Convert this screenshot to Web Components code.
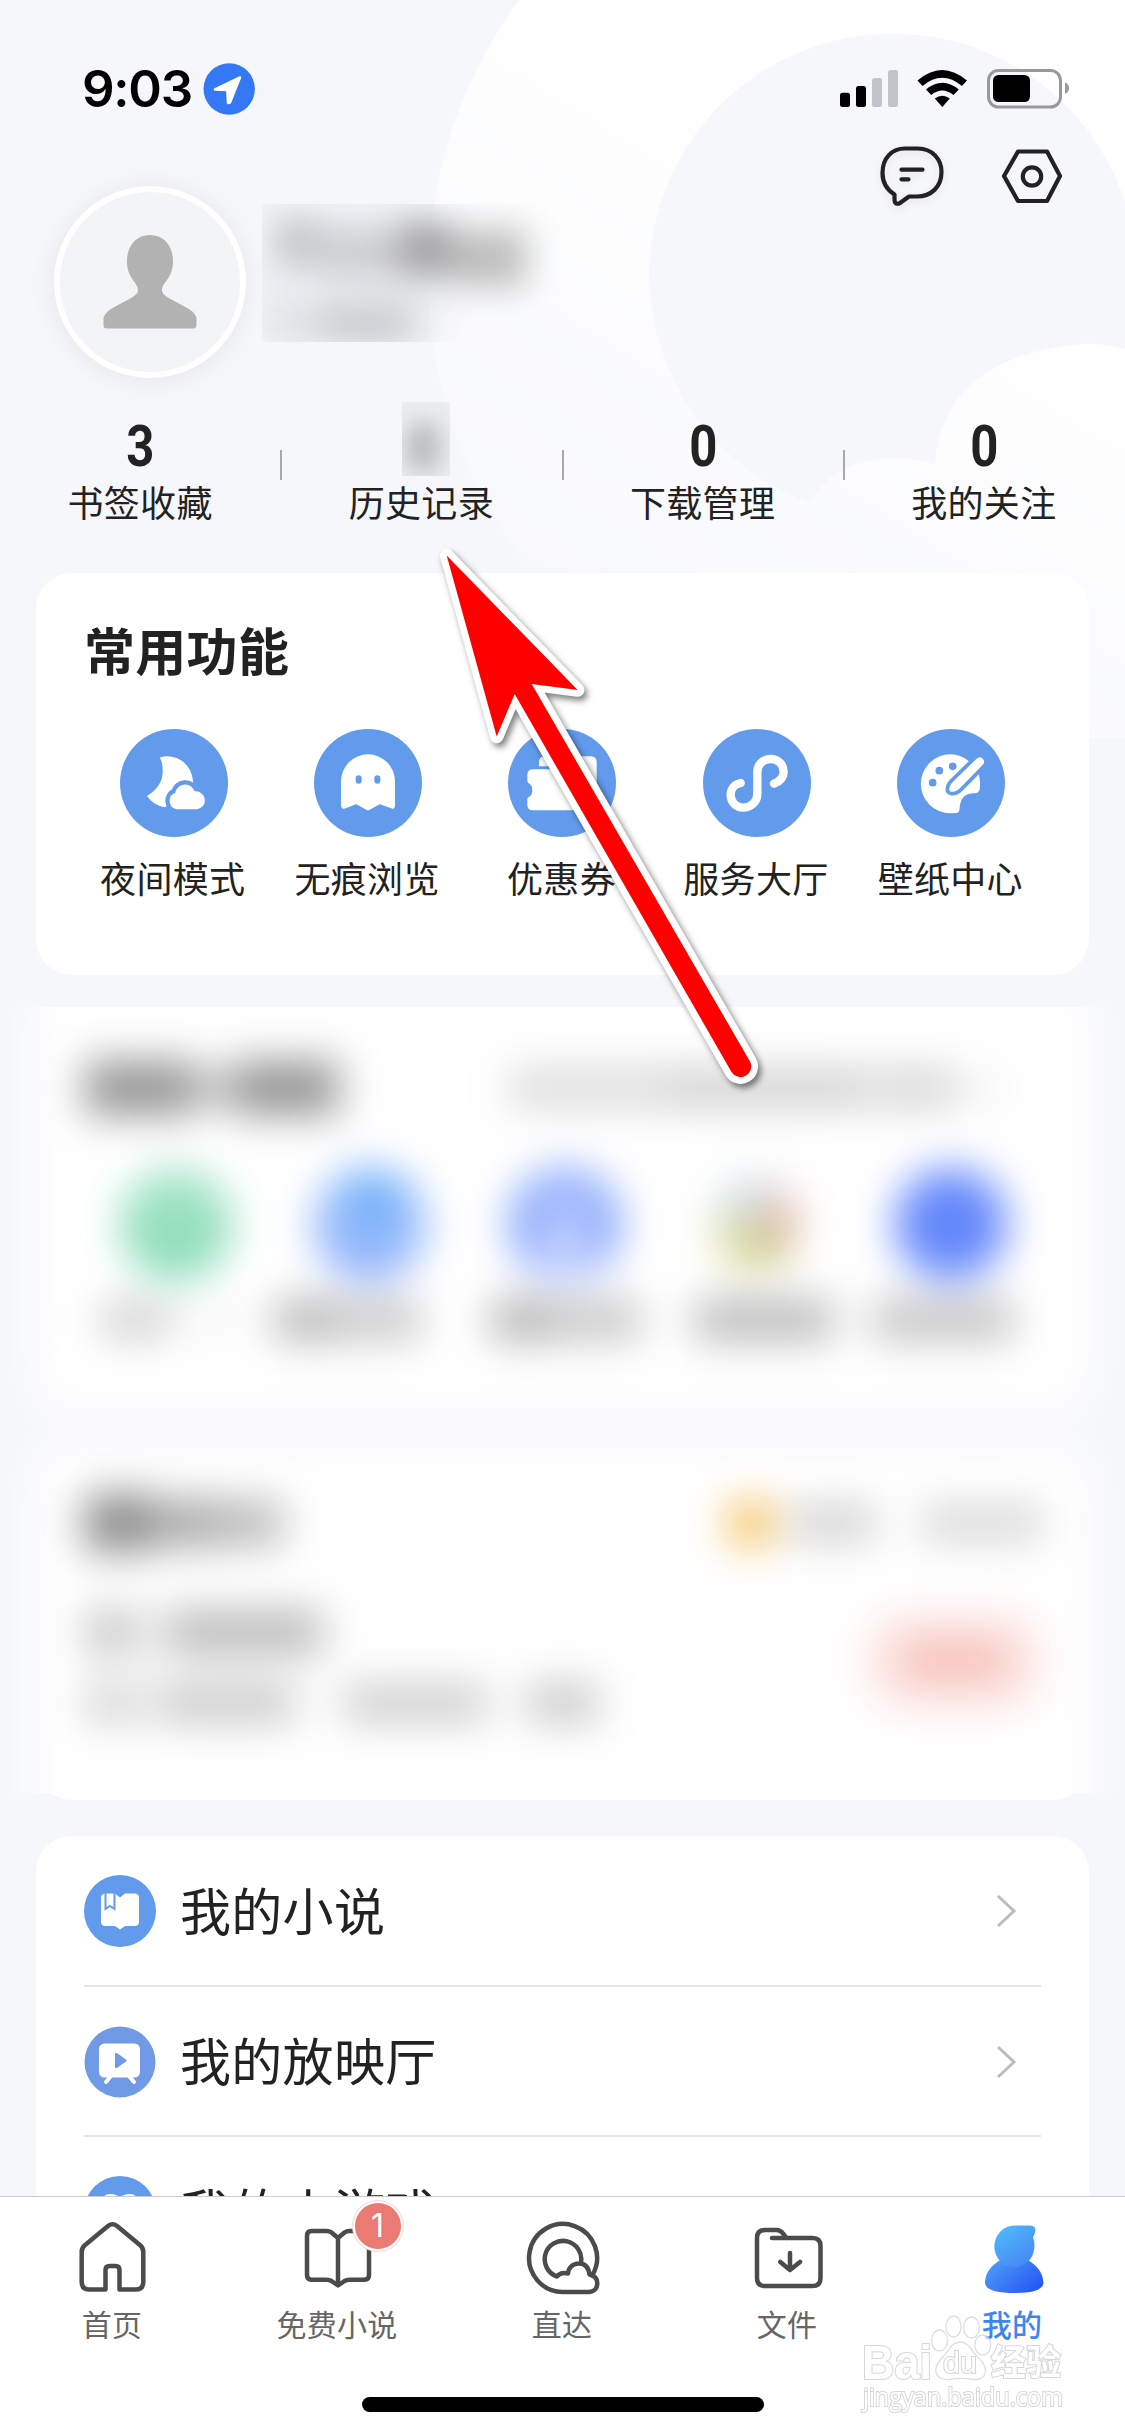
<!DOCTYPE html>
<html lang="zh-CN">
<head>
<meta charset="utf-8">
<title>我的</title>
<style>
html,body{margin:0;padding:0}
body{width:1125px;height:2436px;overflow:hidden;background:#f6f7fb;font-family:"Noto Sans CJK SC",sans-serif;color:#222}
</style>
</head>
<body>
<profile-screen></profile-screen>
<script>
const def=(name,html,setup)=>customElements.define(name,class extends HTMLElement{
  connectedCallback(){
    if(this.shadowRoot)return;
    const root=this.attachShadow({mode:'open'});
    root.innerHTML='<style>*{box-sizing:border-box}svg{display:block;flex:none}</style>'+(typeof html==='function'?html(this):html);
    if(setup)setup(this,root);
  }
});

const icons={
night:`<svg width="108" height="108" viewBox="60 56 324 324"><circle cx="222" cy="218" r="162" fill="#629bec"/><path fill="#fff" d="M181 141Q204 134 230 143Q275 162 280 218L260 260L194 291Q160 285 141 257Q190 227 188 180Q188 155 180 143Z"/><path id="c" d="M230 297A26 26 0 0 1 226 247A30 30 0 0 1 284 243A27 27 0 0 1 291 297Z" fill="#fff" stroke="#629bec" stroke-width="26" paint-order="stroke"/></svg>`,
ghost:`<svg width="108" height="108" viewBox="642 56 324 324"><circle cx="804" cy="218" r="162" fill="#629bec"/><path fill="#fff" d="M723 213A81 81 0 0 1 885 213V284Q885 298 873 294L844 283Q840 281 836 283L808 299Q804 301 800 299L772 283Q768 281 764 283L737 294Q723 298 723 284Z"/><rect x="767" y="195" width="18" height="25" rx="9" fill="#629bec"/><rect x="823" y="195" width="18" height="25" rx="9" fill="#629bec"/></svg>`,
coupon:`<svg width="108" height="108" viewBox="0 0 324 324"><circle cx="162" cy="162" r="162" fill="#629bec"/><path fill="#fff" d="M93 112V100Q93 82 111 82H248Q266 82 266 100V186Q266 204 248 204H236V130Q236 112 218 112Z"/><path fill="#fff" d="M58 138Q58 121 75 121H210Q226 121 226 138V228Q226 244 210 244H75Q58 244 58 228V210Q58 205 64 203Q73 198 73 183Q73 168 64 164Q58 161 58 155Z"/></svg>`,
service:`<svg width="108" height="108" viewBox="429 56 324 324"><circle cx="591" cy="218" r="162" fill="#629bec"/><path fill="none" stroke="#fff" stroke-width="25" stroke-linecap="round" d="M642 220C662 212 671 200 671 184C671 162 653 146 632 146C609 146 592 162 592 186V250C592 275 572 292 549 292C528 292 512 275 512 254C512 234 525 221 542 218"/></svg>`,
palette:`<svg width="108" height="108" viewBox="1011 56 324 324"><circle cx="1173" cy="218" r="162" fill="#629bec"/><path fill="#fff" d="M1171 132A88 88 0 0 0 1171 309L1190 308Q1199 306 1199 292Q1202 250 1240 249Q1256 249 1259 238Q1262 215 1257 194L1226 152Q1202 133 1171 132Z"/><g fill="#629bec"><circle cx="1118" cy="217" r="11.500"/><circle cx="1138" cy="181" r="11.500"/><circle cx="1178" cy="168" r="11.500"/></g><path fill="#fff" stroke="#629bec" stroke-width="22" paint-order="stroke" d="M1249 146Q1260 136 1269 146Q1277 155 1267 165L1201 232Q1188 246 1173 244Q1166 243 1168 234Q1169 224 1178 215Z"/></svg>`,
novel:`<svg width="72" height="72"><circle cx="36" cy="36" r="36" fill="#629bec"/><path fill="#fff" d="M17 23Q17 18.500 21.500 18.500H31L36 22.500L41 18.500H50.500Q55 18.500 55 23V46.500Q55 51 50.500 51H41L36 54.500L31 51H21.500Q17 51 17 46.500Z"/><path fill="#fff" stroke="#629bec" stroke-width="2" d="M21.500 17.500H30.500V34L26 31L21.500 34Z"/></svg>`,
cinema:`<svg width="72" height="72"><circle cx="36" cy="36" r="35.500" fill="#7099e6"/><rect x="15" y="17.500" width="41" height="34" rx="5.500" fill="#fff"/><path d="M27 50L22 56M45 50L50 56" stroke="#fff" stroke-width="4" stroke-linecap="round"/><path fill="#7099e6" d="M31 28.500Q31 26 33.200 27.300L42 33.500Q43.500 34.500 42 35.500L33.200 41.700Q31 43 31 40.500Z"/></svg>`,
game:`<svg width="72" height="72"><circle cx="36" cy="36" r="36" fill="#629bec"/><path fill="#fff" d="M16 29Q18 18 26 18Q32 18 36 21Q40 18 46 18Q54 18 56 29L58 46Q57 54 50 50L43 44H29L22 50Q15 54 14 46Z"/></svg>`
};

def('page-backdrop',`<style>:host{position:absolute;left:0;top:0;width:1125px;height:738px;overflow:hidden}</style>
<svg width="1125" height="738"><defs><linearGradient id="g" gradientUnits="userSpaceOnUse" x1="800" y1="150" x2="520" y2="600"><stop offset="0" stop-color="#fff"/><stop offset="1" stop-color="#fff" stop-opacity=".12"/></linearGradient></defs>
<path fill="url(#g)" fill-rule="evenodd" d="M429 273A457 457 0 0 1 1343 273V738H886A457 457 0 0 1 429 273ZM649 277A244 244 0 0 0 811 503Q832 459 898 458Q922 459 935 465Q942 355 1087 343.500Q1108 344 1125 349V202A244 244 0 0 0 649 277Z"/></svg>`);

def('status-bar',`<style>
:host{display:flex;height:132px;padding:0 56px 0 82px;align-items:flex-start}
.t{font:600 51px/56px Inter,sans-serif;color:#000;margin-top:61px;width:121px;letter-spacing:-1.300px;white-space:nowrap}
.loc{margin-top:63px}.r{display:flex;margin:68px 0 0 auto}
</style><div class="t">9:03</div>
<svg class="loc" width="52" height="52" viewBox="202.500 63 52 52"><circle cx="228.700" cy="89" r="25.700" fill="#3478f6"/><path fill="#fff" stroke="#fff" stroke-width="2.500" stroke-linejoin="round" d="M239.500 77.500L214.500 89.500L226.800 90L227.500 103L229.500 102.500Z"/></svg>
<svg class="r" width="231" height="42" viewBox="838 68 231 42"><rect x="840" y="92.700" width="10" height="14.300" rx="2.500"/><rect x="856" y="86" width="10" height="21" rx="2.500"/><g fill="#c3c4c9"><rect x="872" y="78" width="10" height="29" rx="2.500"/><rect x="888" y="70" width="10" height="37" rx="2.500"/></g>
<path d="M917.500 80.500Q942 59.500 967 80.500L962 86Q942.300 69.500 922.500 86ZM926 89.500Q942.300 76 958.800 89.500L953.500 95Q942.300 86 931.200 95ZM934.800 98.500Q942.300 93 949.800 98.500L942.300 107Z"/>
<rect x="988.500" y="70.500" width="72" height="36.500" rx="10" fill="none" stroke="#999" stroke-width="3"/><rect x="993" y="75" width="37" height="27" rx="5.500"/><path fill="#999" d="M1065 82.500Q1069 84 1069 88Q1069 92 1065 94Z"/></svg>`);

def('profile-header',`<style>
:host{display:flex;height:270px;align-items:flex-start;padding-left:54px}
.av{width:192px;height:192px;border-radius:50%;background:#f3f4f6;border:6px solid #fff;margin-top:54px;box-shadow:0 2px 30px rgba(0,0,0,.07);display:flex;justify-content:center}
.av svg{margin-top:43px}
.name{margin:72px 0 0 16px;width:300px;height:138px;overflow:hidden}
.name svg{filter:blur(17px)}
.acts{display:flex;gap:55px;margin:12px 61px 0 auto}
.acts svg:first-child{filter:drop-shadow(0 3px 4px rgba(0,0,0,.08))}
</style>
<div class="av"><svg width="94" height="94" viewBox="103 235 94 94"><path fill="#b2b2b2" d="M150 235C164 235 173 246 173 261C173 279 162 282 162 290C162 296 170 298 189 309Q196.500 314 196.500 319V325Q196.500 328.600 193 328.600H107Q103.500 328.600 103.500 325V319Q103.500 314 111 309C130 298 138 296 138 290C138 282 127 279 127 261C127 246 136 235 150 235Z"/></svg></div>
<div class="name"><svg width="300" height="138"><rect x="-40" y="-30" width="220" height="200" fill="#e9ebef" opacity=".8"/><rect x="14" y="16" width="42" height="44" fill="#c0c2c6"/><rect x="58" y="26" width="80" height="46" fill="#cbccd0"/><rect x="138" y="18" width="50" height="54" fill="#a2a2a6"/><rect x="188" y="26" width="76" height="56" fill="#bcbcbc"/><rect x="60" y="104" width="90" height="40" fill="#c3c5c8"/><rect x="4" y="104" width="56" height="34" fill="#dcdfe2"/></svg></div>
<div class="acts"><svg width="66" height="64" viewBox="879 144 66 64" fill="none" stroke="#222" stroke-width="4.200" stroke-linecap="round" stroke-linejoin="round"><path d="M905 148.500H918C932 148.500 941.500 159 941.500 172C941.500 187 931 196.500 917 196.500H909L900 203Q894.500 205.500 894.500 199V194.500Q882.500 187 882.500 173C882.500 158 892 148.500 905 148.500Z"/><path d="M901.500 169.700H922.500M901.500 179.300H908.500"/></svg>
<svg width="64" height="64" viewBox="1000 144.500 64 64" fill="none" stroke="#222" stroke-width="4.200" stroke-linejoin="round"><path d="M1018 152H1047L1060 176.500L1047 201.500H1018L1004 176.500Z"/><circle cx="1032" cy="177" r="9.200"/></svg></div>`);

def('stat-item',e=>`<style>
:host{display:flex;flex:1;flex-direction:column;align-items:center;position:relative}
.n{height:72px;display:flex;align-items:flex-end;justify-content:center;font:700 57px/54px Roboto,sans-serif}
.n span{display:block;transform:scaleX(.86)}
.l{font-size:36px;line-height:54px;margin:0 0 0 -1px;letter-spacing:.3px}
i{position:absolute;right:-1px;top:48px;width:2px;height:30px;background:#a9a9ad}
:host([last]) i{display:none}
.b{width:48px;height:74px;overflow:hidden;margin:0 0 -2px 8px;background:#eceef1}
.b svg{filter:blur(12px)}
</style>${e.hasAttribute('masked')?'<div class="b"><svg width="48" height="74"><rect x="6" y="22" width="30" height="46" fill="#b4b5b8"/></svg></div>':`<div class="n"><span>${e.getAttribute('value')}</span></div>`}<div class="l"><slot></slot></div><i></i>`);

def('stats-row',`<style>:host{display:flex;height:171px;padding-top:0}</style><slot></slot>`);

def('shortcut-item',e=>`<style>
:host{display:flex;flex-direction:column;align-items:center;width:194.400px}
.l{font-size:36px;line-height:54px;margin:13px 0 0 -2px;letter-spacing:.3px;white-space:nowrap}
</style>${icons[e.getAttribute('icon')]}<div class="l"><slot></slot></div>`);

def('feature-card',e=>`<style>
:host{display:block;margin:0 36px;height:402px;border-radius:36px;background:#fff;padding:38px 0 0}
h2{margin:0 0 0 48px;font-size:51px;line-height:76px;font-weight:600;letter-spacing:.3px}
.g{display:flex;justify-content:center;margin-top:42px}
</style><h2>${e.getAttribute('heading')}</h2><div class="g"><slot></slot></div>`);

def('soft-bar',e=>`<style>:host{display:block;flex:none;width:${e.getAttribute('w')}px;height:${e.getAttribute('h')}px;margin-left:${e.getAttribute('x')||0}px;background:${e.getAttribute('c')};border-radius:${e.getAttribute('r')||0}px}</style>`);

def('masked-section',`<style>
:host{display:block;height:786px;margin-top:32px;overflow:hidden;background:#f6f7fb}
.w{filter:blur(21px);padding:0 36px;margin-top:-32px}
.c{background:#fff;border-radius:30px;padding-left:49px}
.c1{height:435px;padding-top:83px}.c2{height:460px;margin-top:36px;padding-top:47px}
.r{display:flex;align-items:center}
</style><div class="w"><div class="c c1">
<div class="r" style="height:60px"><soft-bar w="108" h="54" c="#959595"></soft-bar><soft-bar w="42" h="34" c="#bbb"></soft-bar><soft-bar w="104" h="54" c="#959595"></soft-bar><soft-bar x="170" w="155" h="40" c="#dcdcdc"></soft-bar><soft-bar w="205" h="40" c="#d2d2d2"></soft-bar><soft-bar x="6" w="80" h="40" c="#d6d6d6"></soft-bar><soft-bar x="8" w="40" h="24" c="#eee"></soft-bar></div>
<div class="r" style="height:108px;margin-top:52px"><soft-bar x="35" w="112" h="112" r="56" c="linear-gradient(#a6e5c8,#86dbb5)"></soft-bar><soft-bar x="82" w="112" h="112" r="56" c="radial-gradient(circle at 55% 25%,#69acfa 10%,#9cbffb 45%,#6f90fa 100%)"></soft-bar><soft-bar x="83" w="112" h="112" r="56" c="radial-gradient(ellipse 26% 60% at 50% 65%,#dbe4ff 20%,#86a5fc 100%)"></soft-bar><soft-bar x="92" w="84" h="92" r="44" c="conic-gradient(#d1dfe2,#e9b0a0 25%,#c5c98a 40%,#dfdf9f 65%,#cfe0ea 90%)"></soft-bar><soft-bar x="98" w="112" h="112" r="56" c="#6488fb"></soft-bar></div>
<div class="r" style="height:40px;margin-top:22px"><soft-bar x="17" w="68" h="34" c="#cdcdcd"></soft-bar><soft-bar x="15" w="58" h="16" c="#eee"></soft-bar><soft-bar x="32" w="60" h="42" c="#b8b8b8"></soft-bar><soft-bar w="86" h="40" c="#c8c8c8"></soft-bar><soft-bar x="70" w="60" h="42" c="#b5b5b5"></soft-bar><soft-bar w="90" h="40" c="#c6c6c6"></soft-bar><soft-bar x="54" w="138" h="42" c="#bbb"></soft-bar><soft-bar x="40" w="140" h="40" c="#c2c2c2"></soft-bar></div>
</div><div class="c c2">
<div class="r" style="height:60px"><soft-bar w="66" h="58" c="#8c8c8c"></soft-bar><soft-bar w="68" h="48" c="#aaa"></soft-bar><soft-bar w="64" h="46" c="#bbb"></soft-bar><soft-bar x="442" w="52" h="52" r="26" c="#f6c56c"></soft-bar><soft-bar x="14" w="84" h="38" c="#d2d2d2"></soft-bar><soft-bar x="46" w="122" h="38" c="#d9d9d9"></soft-bar></div>
<div style="display:flex;padding-right:40px;align-items:flex-start;margin-top:42px"><div style="flex:1"><div class="r" style="height:64px;padding-top:10px"><soft-bar w="50" h="44" c="#c6c6c6"></soft-bar><soft-bar w="34" h="40" c="#ececec"></soft-bar><soft-bar w="154" h="44" c="#bababa"></soft-bar></div>
<div class="r" style="height:64px;margin-top:12px"><soft-bar w="50" h="38" c="#d2d2d2"></soft-bar><soft-bar w="26" h="36" c="#eaeaea"></soft-bar><soft-bar w="134" h="40" c="#cacaca"></soft-bar><soft-bar x="48" w="144" h="38" c="#cdcdcd"></soft-bar><soft-bar x="40" w="72" h="40" c="#cacaca"></soft-bar></div></div>
<div style="display:flex;align-items:center;justify-content:center;width:190px;height:104px;border-radius:50px;background:#fdebe9;margin:14px 0 0"><soft-bar w="110" h="46" c="#f7c3ba"></soft-bar></div></div>
</div></div>`);

def('card-foot',`<style>:host{display:flex;height:7px;margin:0 36px 36px;overflow:hidden;align-items:flex-end}div{flex:1;height:100px;background:#fff;border-radius:36px}</style><div></div>`);

def('menu-row',e=>`<style>
:host{display:flex;align-items:center;height:150.500px;margin:0 48px;border-bottom:2px solid #e6e6e8}
svg{margin-top:2px}
.l{flex:1;font-size:51px;line-height:76px;margin:-3px 0 0 24px;letter-spacing:.3px}
</style>${icons[e.getAttribute('icon')]}<div class="l"><slot></slot></div><svg width="24" height="38" viewBox="0 0 24 38" fill="none" stroke="#bcbcbc" stroke-width="3" style="margin-right:22px"><path d="M3 4L19 19L3 34"/></svg>`);

def('menu-card',`<style>:host{display:block;margin:0 36px;height:600px;flex:none;background:#fff;border-radius:36px}</style><slot></slot>`);

const tabs={
home:`<svg width="80" height="80" viewBox="72.500 2218 80 80"><path d="M105 2290.500H89Q81.200 2290.500 81.200 2283V2253Q81.200 2249 84 2246.500L107.500 2227Q112 2223.500 116.500 2227L140 2246.500Q142.800 2249 142.800 2253V2283Q142.800 2290.500 135 2290.500H119V2271Q119 2267 115 2267H109Q105 2267 105 2271Z"/></svg>`,
book:`<svg width="80" height="80" viewBox="297.500 2218 80 80"><path d="M337.500 2239L331 2233.500Q329 2232 326 2232H311Q306.500 2232 306.500 2237V2276Q306.500 2280.700 311 2280.700H326Q329 2280.700 331 2282L337.500 2286.500L344 2282Q346 2280.700 349 2280.700H364Q368.500 2280.700 368.500 2276V2237Q368.500 2232 364 2232H349Q346 2232 344 2233.500ZM337.500 2239V2286"/></svg>`,
direct:`<svg width="80" height="80" viewBox="522.500 2218 80 80"><path d="M592 2276A34 34 0 1 0 562.500 2293H588C594 2293 596.800 2289 596.800 2284C596.800 2280 595 2277 589 2275.500C588 2268 584 2264.500 578.500 2264.500C572 2264.500 568 2269 567.500 2274.500C562 2273 559 2274 556.500 2277.500A18.300 18.300 0 1 1 580.500 2263.500"/></svg>`,
files:`<svg width="80" height="80" viewBox="747.500 2218 80 80"><path stroke-linecap="round" d="M771.500 2239H812Q820 2239 820 2247V2279Q820 2287 812 2287H764.500Q756.500 2287 756.500 2279V2239Q756.500 2231 764.500 2231H776Q780 2231 783 2235L786 2239M789.500 2254V2270M779.800 2263L789.500 2271L799.500 2263"/></svg>`,
me:`<svg width="80" height="80" viewBox="972.500 2218 80 80" style="stroke:none"><defs><linearGradient id="a" x1="0" y1="0" x2=".7" y2="1"><stop stop-color="#50bff8"/><stop offset="1" stop-color="#4687f6"/></linearGradient><linearGradient id="b" x1="0" y1=".2" x2="1" y2=".8"><stop stop-color="#4d9cf7"/><stop offset="1" stop-color="#2455f6"/></linearGradient></defs><path fill="url(#b)" d="M1000 2261Q984.500 2270 984.500 2284Q985.500 2294 1014 2294Q1042 2294 1043 2284Q1042 2269 1027 2261Z"/><path fill="url(#a)" d="M1014 2226.500H1029Q1036 2226.500 1034.600 2233Q1034 2236 1032.500 2238Q1034.500 2243 1033.800 2249A20 21 0 1 1 1014 2226.500Z"/></svg>`};

def('tab-item',e=>`<style>
:host{display:flex;flex:1;flex-direction:column;align-items:center;color:#666}
:host([active]){color:#3d86ef;font-weight:500}
.i{display:flex;position:relative;margin-top:20px}
.i svg{fill:none;stroke:#4b4b4b;stroke-width:4.500;stroke-linejoin:round}
.l{font-size:30px;line-height:44px;margin:4px 0 0 -1px;letter-spacing:.2px}
.b{position:absolute;left:55px;top:-16px;width:50px;height:50px;border-radius:50%;background:#eb7a73;border:2.500px solid #fff;box-shadow:0 0 0 1px #f9d5d2;color:#fff;font:32px/45px Inter,sans-serif;text-align:center}
</style><div class="i">${tabs[e.getAttribute('icon')]}${e.hasAttribute('badge')?`<span class="b">${e.getAttribute('badge')}</span>`:''}</div><div class="l"><slot></slot></div>`);

def('tab-bar',`<style>
:host{display:flex;flex-direction:column;align-items:center;height:240px;background:#fff;border-top:1.500px solid #ccc}
.t{display:flex;align-self:stretch;height:200px}
.h{width:402px;height:15px;border-radius:8px;background:#000}
</style><div class="t"><slot></slot></div><div class="h"></div>`);

def('pointer-arrow',`<style>:host{position:absolute;left:420px;top:530px;pointer-events:none}svg{filter:drop-shadow(3px 4px 3px rgba(0,0,0,.5))}</style>
<svg width="360" height="580" viewBox="420 530 360 580"><path id="p" fill="red" stroke="#fff" stroke-width="13.500" stroke-linejoin="round" paint-order="stroke" d="M446.700 555.500L577.700 690L531.700 684L749.700 1061A10.600 10.600 0 0 1 731.500 1072L514.700 694L496.700 736.500Z"/></svg>`);

def('site-watermark',`<style>
:host{position:absolute;left:860px;top:2310px;width:220px;height:110px;opacity:.85}
svg{overflow:visible}
text{fill:#fff;stroke:#d2d2d2;stroke-width:2.200;paint-order:stroke}
</style><svg width="220" height="110" viewBox="860 2310 220 110"><g fill="#fff" fill-opacity=".75" stroke="#d9d9d9" stroke-width="1.300"><ellipse cx="939.500" cy="2340.500" rx="8" ry="10.500"/><ellipse cx="953.500" cy="2326.500" rx="7.500" ry="10.500"/><ellipse cx="971.500" cy="2327.500" rx="8" ry="10.500"/><ellipse cx="982.800" cy="2345" rx="8" ry="10"/><path d="M960.500 2342C967 2342 970 2347 974 2353C979 2359 986 2364 985.500 2371C985 2378 979 2380 973 2379.500C965 2378 956 2378 949 2379.500C941 2380 936 2377 935.700 2370C936 2362 943 2358 947 2352C951 2346 954 2342 960.500 2342Z"/></g>
<text x="862" y="2379" font-family="Liberation Sans,sans-serif" font-weight="700" font-size="48" textLength="70" lengthAdjust="spacingAndGlyphs">Bai</text>
<text x="943" y="2373" font-family="Liberation Sans,sans-serif" font-size="30" textLength="34" lengthAdjust="spacingAndGlyphs">du</text>
<text x="991" y="2375" font-family="Noto Sans CJK SC,sans-serif" font-weight="700" font-size="35" textLength="70">经验</text>
<text x="863" y="2406" font-family="Open Sans,sans-serif" font-size="26" textLength="200" lengthAdjust="spacingAndGlyphs">jingyan.baidu.com</text></svg>`);

def('profile-screen',`<style>
:host{display:flex;flex-direction:column;width:1125px;height:2436px;position:relative;overflow:hidden;background:#f6f7fb}
main{height:2196px;overflow:hidden;position:relative}
</style><page-backdrop></page-backdrop><main>
<status-bar></status-bar><profile-header></profile-header>
<stats-row><stat-item value="3">书签收藏</stat-item><stat-item masked>历史记录</stat-item><stat-item value="0">下载管理</stat-item><stat-item value="0" last>我的关注</stat-item></stats-row>
<feature-card heading="常用功能"><shortcut-item icon="night">夜间模式</shortcut-item><shortcut-item icon="ghost">无痕浏览</shortcut-item><shortcut-item icon="coupon">优惠券</shortcut-item><shortcut-item icon="service">服务大厅</shortcut-item><shortcut-item icon="palette">壁纸中心</shortcut-item></feature-card>
<masked-section></masked-section><card-foot></card-foot>
<menu-card><menu-row icon="novel">我的小说</menu-row><menu-row icon="cinema">我的放映厅</menu-row><menu-row icon="game">我的小游戏</menu-row></menu-card>
</main><tab-bar><tab-item icon="home">首页</tab-item><tab-item icon="book" badge="1">免费小说</tab-item><tab-item icon="direct">直达</tab-item><tab-item icon="files">文件</tab-item><tab-item icon="me" active>我的</tab-item></tab-bar>
<pointer-arrow></pointer-arrow><site-watermark></site-watermark>`);
</script>
</body>
</html>
